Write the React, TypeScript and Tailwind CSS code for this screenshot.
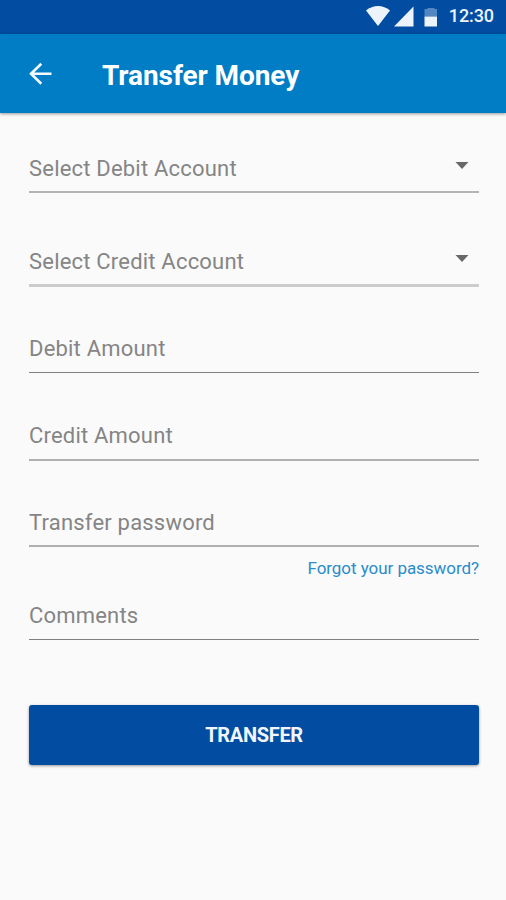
import React from 'react';

const Field: React.FC<{ label: string; className: string; select?: boolean }> = ({ label, className, select }) => (
  <div className={`flex justify-between ${className}`}>
    <span className="text-[22px] leading-[26px] tracking-[0.2px] text-[#858585]">{label}</span>
    {select && (
      <svg className="mt-[6px] mr-[10px] h-[7px] w-[14px]" viewBox="0 0 14 7" fill="#686868">
        <path d="M0.500 0h13L7 7z" />
      </svg>
    )}
  </div>
);

export default function App() {
  return (
    <div className="h-[900px] w-[506px] overflow-hidden bg-[#fafafa] font-['Roboto',sans-serif]">
      <div className="flex h-[34px] items-center justify-end bg-[#024da1] pr-3 text-[#edf3fb]">
        <svg className="h-[34px] w-[72px]" viewBox="0 0 72 34" fill="currentColor">
          <path d="M0 10.500C7 4.500 17 4.500 24 10.500L12 26z" />
          <path d="M47.500 6.500v20H28z" />
          <path d="M58.500 9h3V8h7v1h2.500v7.500H58.500z" opacity=".35" />
          <path d="M58.500 16.500H71v10H58.500z" />
        </svg>
        <span className="ml-[11px] pb-[2px] text-[18px] leading-[34px] font-medium tracking-[-0.1px]">12:30</span>
      </div>

      <header className="flex h-[79px] items-center bg-[#007dc4] pl-[29px] text-white shadow-[0_1px_3px_rgba(0,0,0,0.4)]">
        <svg className="h-[23px] w-[23px]" viewBox="0 0 23 23" fill="none" stroke="#f2f9ff" strokeWidth="2.600">
          <path d="M22.500 11.700H2M12.300 1.700L2 11.700 12.300 21.700" />
        </svg>
        <h1 className="mt-[4px] ml-[50px] text-[28px] font-bold tracking-[-0.08px]">Transfer Money</h1>
      </header>

      <main className="pt-[43px] pr-[27px] pl-[29px]">
        <Field label="Select Debit Account" className="h-[37px] border-b-2 border-[#b4b4b4]" select />
        <Field label="Select Credit Account" className="mt-[56px] h-[38px] border-b-3 border-[#cccccc]" select />
        <Field label="Debit Amount" className="mt-[49px] h-[37px] border-b border-[#808080]" />
        <Field label="Credit Amount" className="mt-[50px] h-[38px] border-b-2 border-[#b0b0b0]" />
        <Field label="Transfer password" className="mt-[49px] h-[37px] border-b-2 border-[#b0b0b0]" />
        <div className="mt-[10px] text-right text-[17px] leading-[22px] tracking-[-0.05px] text-[#2a8cca]">
          Forgot your password?
        </div>
        <Field label="Comments" className="mt-[24px] h-[37px] border-b border-[#808080]" />
        <button className="mt-[65px] h-[60px] w-full rounded-[3px] bg-[#024da1] pb-[1px] text-[20px] font-bold tracking-[-0.3px] text-[#f2f6fc] shadow-[0_1px_3px_rgba(0,0,0,0.4)]">
          TRANSFER
        </button>
      </main>
    </div>
  );
}
